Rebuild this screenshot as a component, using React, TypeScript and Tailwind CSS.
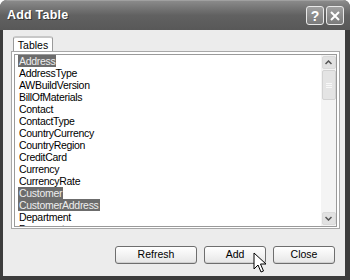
import React from "react";

const items = [
  "Address",
  "AddressType",
  "AWBuildVersion",
  "BillOfMaterials",
  "Contact",
  "ContactType",
  "CountryCurrency",
  "CountryRegion",
  "CreditCard",
  "Currency",
  "CurrencyRate",
  "Customer",
  "CustomerAddress",
  "Department",
  "Document",
];
const selected = new Set(["Address", "Customer", "CustomerAddress"]);

function Btn({ label, w }: { label: string; w: string }) {
  return (
    <div
      className={`${w} h-[18px] flex items-center justify-center rounded-[3px] border border-[#6e6e6e] bg-gradient-to-b from-[#ffffff] to-[#e6e6e6] text-[10.5px] text-black shadow-[inset_0_-1px_0_#d0d0d0]`}
    >
      {label}
    </div>
  );
}

export default function App() {
  return (
    <div
      className="w-[350px] h-[280px] flex flex-col bg-[#3c3c3c] rounded-t-[7px] overflow-hidden"
      style={{ fontFamily: '"Liberation Sans", Arial, sans-serif' }}
    >
      {/* Title bar */}
      <div className="h-[30px] flex items-center pl-[7px] pr-[5px] bg-gradient-to-b from-[#8a8a8a] via-[#616161] to-[#585858] border-t border-[#a0a0a0]">
        <div
          className="text-white font-bold text-[12.5px] tracking-[0.2px] flex-1"
          style={{ textShadow: "1px 1px 0 #333" }}
        >
          Add Table
        </div>
        <div className="flex gap-[2px] mr-[1px]">
          <div className="w-[18px] h-[19px] rounded-[3px] border border-[#e8e8e8] bg-gradient-to-b from-[#a0a0a0] to-[#7a7a7a] flex items-center justify-center text-white font-bold text-[14px] leading-none">
            ?
          </div>
          <div className="w-[18px] h-[19px] rounded-[3px] border border-[#e8e8e8] bg-gradient-to-b from-[#a0a0a0] to-[#7a7a7a] flex items-center justify-center">
            <svg width="12" height="12" viewBox="0 0 12 12">
              <path d="M2 2 L10 10 M10 2 L2 10" stroke="white" strokeWidth="2" />
            </svg>
          </div>
        </div>
      </div>
      {/* Body */}
      <div className="flex-1 ml-[3px] mr-[5px] mb-[4px] bg-[#ececec] flex flex-col relative">
        <div className="pl-[10px] pt-[6px] flex">
          <div className="w-[40px] h-[15px] border border-b-0 border-[#9a9a9a] rounded-t-[3px] bg-white text-[10.5px] leading-[14px] text-center text-black border-t-2 border-t-[#c8c8c8]">
            Tables
          </div>
        </div>
        <div className="ml-[8px] mr-[5px] h-[178px] border border-[#a8a8a8] bg-white p-[2px] pb-[1px]">
          <div className="h-full border border-[#9a9a9a] bg-white flex">
            <div className="flex-1 overflow-hidden pl-[3px] pt-[0px]">
              {items.map((it) => (
                <div key={it} className="h-[12px] flex items-center">
                  <span
                    className={`text-[10.5px] leading-[12px] tracking-[-0.3px] px-[1px] ${
                      selected.has(it) ? "bg-[#6c6c6c] text-[#eeeeee]" : "text-black"
                    }`}
                  >
                    {it}
                  </span>
                </div>
              ))}
            </div>
            <div className="w-[15px] bg-[#f4f4f4] flex flex-col items-center py-[1px]">
              <div className="w-[14px] h-[13px] rounded-[2px] bg-[#e2e2e2] border border-[#dadada] flex items-center justify-center">
                <svg width="7" height="5" viewBox="0 0 7 5">
                  <path d="M0.5 4 L3.5 1 L6.5 4" stroke="#555" strokeWidth="1.5" fill="none" />
                </svg>
              </div>
              <div className="w-[14px] h-[30px] mt-[1px] rounded-[2px] bg-[#e4e4e4] border border-[#d2d2d2] flex flex-col items-center justify-center gap-[1px]">
                <div className="w-[6px] h-[1px] bg-[#f8f8f8]" />
                <div className="w-[6px] h-[1px] bg-[#f8f8f8]" />
                <div className="w-[6px] h-[1px] bg-[#f8f8f8]" />
              </div>
              <div className="flex-1" />
              <div className="w-[14px] h-[13px] rounded-[2px] bg-[#e2e2e2] border border-[#dadada] flex items-center justify-center">
                <svg width="7" height="5" viewBox="0 0 7 5">
                  <path d="M0.5 1 L3.5 4 L6.5 1" stroke="#555" strokeWidth="1.5" fill="none" />
                </svg>
              </div>
            </div>
          </div>
        </div>
        <div className="flex-1" />
        <div className="flex justify-end gap-[7px] pr-[10px] pb-[12px]">
          <Btn label="Refresh" w="w-[82px]" />
          <Btn label="Add" w="w-[62px]" />
          <Btn label="Close" w="w-[62px]" />
        </div>
        {/* cursor */}
        <svg
          className="absolute left-[250px] top-[222px]"
          width="14"
          height="22"
          viewBox="0 0 14 22"
        >
          <path
            d="M1 1 L1 17 L5 13 L8 20 L10.5 19 L7.5 12 L13 12 Z"
            fill="white"
            stroke="black"
            strokeWidth="1"
            strokeLinejoin="round"
          />
        </svg>
      </div>
    </div>
  );
}
